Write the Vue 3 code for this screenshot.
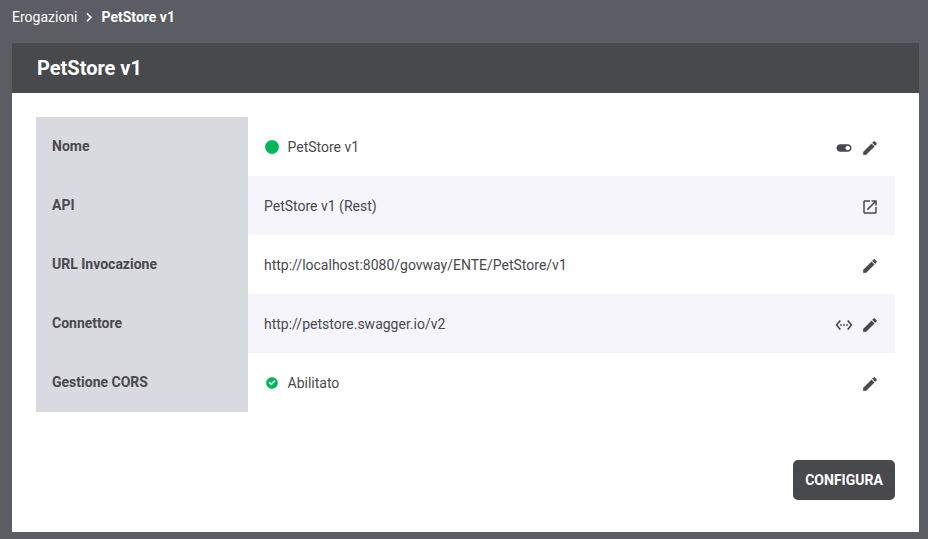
<script setup>
const icons = {
  edit: 'M3 17.25V21h3.75L17.81 9.94l-3.75-3.75L3 17.25zM20.71 7.04c.39-.39.39-1.02 0-1.41l-2.34-2.34c-.39-.39-1.02-.39-1.41 0l-1.83 1.83 3.75 3.75 1.83-1.83z',
  toggle: 'M17 7H7c-2.76 0-5 2.24-5 5s2.24 5 5 5h10c2.76 0 5-2.24 5-5s-2.24-5-5-5zm0 8c-1.66 0-3-1.34-3-3s1.34-3 3-3 3 1.34 3 3-1.34 3-3 3z',
  open: 'M19 19H5V5h7V3H5c-1.11 0-2 .9-2 2v14c0 1.1.89 2 2 2h14c1.1 0 2-.9 2-2v-7h-2v7zM14 3v2h3.59l-9.83 9.83 1.41 1.41L19 6.41V10h2V3h-7z',
  ethernet: 'M7.77 6.76L6.23 5.48.82 12l5.41 6.52 1.54-1.28L3.42 12l4.35-5.24zM7 13h2v-2H7v2zm10-2h-2v2h2v-2zm-6 2h2v-2h-2v2zm6.77-7.52l-1.54 1.28L20.58 12l-4.35 5.24 1.54 1.28L23.18 12l-5.41-6.52z',
  dot: 'M12 2C6.47 2 2 6.47 2 12s4.47 10 10 10 10-4.47 10-10S17.53 2 12 2z',
  check: 'M12 2C6.48 2 2 6.48 2 12s4.48 10 10 10 10-4.48 10-10S17.52 2 12 2zM10.8 16.200l-4.500-4.500 1.800-1.800 2.700 2.700 5.300-5.300 1.800 1.800-7.100 7.100z',
}
const rows = [
  { label: 'Nome', value: 'PetStore v1', status: 'dot', actions: ['toggle', 'edit'] },
  { label: 'API', value: 'PetStore v1 (Rest)', actions: ['open'] },
  { label: 'URL Invocazione', value: 'http://localhost:8080/govway/ENTE/PetStore/v1', actions: ['edit'] },
  { label: 'Connettore', value: 'http://petstore.swagger.io/v2', actions: ['ethernet', 'edit'] },
  { label: 'Gestione CORS', value: 'Abilitato', status: 'check', actions: ['edit'] },
]
</script>

<template>
  <div class="page">
    <nav class="breadcrumb">
      <span>Erogazioni</span>
      <svg class="chevron" viewBox="0 0 8 10"><path d="M2 1.400l3.900 3.900-3.900 3.900" /></svg>
      <strong>PetStore v1</strong>
    </nav>
    <main class="panel">
      <h1 class="title">PetStore v1</h1>
      <div class="body">
        <div class="table">
          <div v-for="row in rows" :key="row.label" class="row">
            <div class="label">{{ row.label }}</div>
            <div class="cell">
              <span v-if="row.status" class="status">
                <svg :class="row.status" viewBox="0 0 24 24"><path :d="icons[row.status]" /></svg>
              </span>
              <span class="value">{{ row.value }}</span>
              <span class="actions">
                <svg v-for="a in row.actions" :key="a" :class="a" viewBox="0 0 24 24"><path :d="icons[a]" /></svg>
              </span>
            </div>
          </div>
        </div>
        <div class="footer"><button class="button">CONFIGURA</button></div>
      </div>
    </main>
  </div>
</template>

<style>
body {
  background: #5c5c65;
}
</style>

<style scoped>
.page {
  box-sizing: border-box;
  height: 539px;
  padding: 0 9px 7px 12px;
  display: flex;
  flex-direction: column;
  background: #5c5c65;
  color: #48494e;
  font: 14px/20px Roboto, sans-serif;
}
.breadcrumb {
  height: 43px;
  box-sizing: border-box;
  padding-top: 7px;
  display: flex;
  align-items: flex-start;
  color: #fff;
}
.chevron {
  width: 8px;
  height: 10px;
  margin: 5px 9px 0 7px;
  fill: none;
  stroke: #fff;
  stroke-width: 1.6;
}
.panel {
  flex: 1;
  display: flex;
  flex-direction: column;
  background: #fff;
}
.title {
  margin: 0;
  padding: 0 25px;
  background: #48494d;
  color: #fff;
  font-size: 20px;
  font-weight: 700;
  line-height: 50px;
}
.body {
  padding: 24px;
}
.row {
  display: flex;
  height: 59px;
}
.label {
  box-sizing: border-box;
  width: 212px;
  padding: 19px 16px 0;
  background: #d9dadf;
  font-weight: 700;
}
.cell {
  flex: 1;
  display: flex;
  align-items: center;
  padding: 1px 16px 0;
}
.row:nth-child(even) .cell {
  background: #f5f5fb;
}
.status {
  width: 16px;
  height: 18px;
  margin-right: 7.500px;
  display: flex;
  align-items: center;
  justify-content: center;
  fill: #04b45a;
}
.dot {
  width: 16px;
  height: 16px;
  flex: none;
  stroke: #04b45a;
  stroke-width: 0.8;
}
.check {
  width: 14px;
  height: 14px;
}
.actions {
  margin: 2px 0 0 auto;
  display: flex;
  gap: 8px;
}
.actions svg {
  width: 18px;
  height: 18px;
  fill: #48494e;
}
.actions .edit {
  stroke: #48494e;
  stroke-width: 0.4;
}
.actions .ethernet {
  stroke: #48494e;
  stroke-width: 0.2;
}
.footer {
  display: flex;
  justify-content: flex-end;
  margin-top: 48px;
}
.button {
  width: 102px;
  height: 40px;
  padding: 0;
  border: 0;
  border-radius: 5px;
  background: #48494d;
  color: #fff;
  font: 700 14px/20px Roboto, sans-serif;
}
</style>
